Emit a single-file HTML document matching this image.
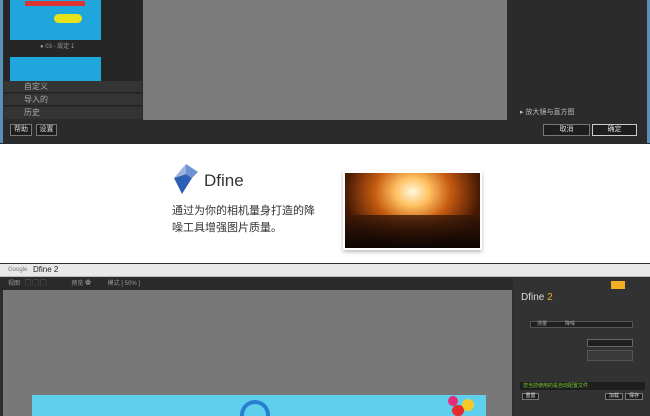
<!DOCTYPE html>
<html><head><meta charset="utf-8"><style>
*{margin:0;padding:0;box-sizing:border-box}
body{width:650px;height:416px;overflow:hidden;background:#fff;position:relative;font-family:"Liberation Sans","Noto Sans CJK SC",sans-serif}
.a{position:absolute}
.btn{position:absolute;background:#1e1e1e;border:1px solid #777;color:#ddd;font-size:7px;text-align:center;line-height:10px}
.cn{font-family:"Liberation Sans","Noto Sans CJK SC",sans-serif}
</style></head><body>
<div class="a" style="left:0;top:0;width:650px;height:144px;background:#2b2b2b"></div>
<div class="a" style="left:0;top:0;width:3px;height:143px;background:#5a8fb8"></div>
<div class="a" style="left:647px;top:0;width:3px;height:143px;background:#5a8fb8"></div>
<div class="a" style="left:4px;top:0;width:138px;height:81px;background:#262626"></div>
<div class="a" style="left:10px;top:0;width:91px;height:40px;background:#1fa6dc"></div>
<div class="a" style="left:25px;top:1px;width:60px;height:5px;background:#d33"></div>
<div class="a" style="left:54px;top:14px;width:28px;height:9px;background:#e8e21a;border-radius:5px"></div>
<div class="a" style="left:40px;top:41px;color:#999;font-size:6px">● 03 - 設定 1</div>
<div class="a" style="left:10px;top:57px;width:91px;height:24px;background:#1fa6dc"></div>
<div class="a" style="left:4px;top:81px;width:138px;height:12px;background:#343434;border-bottom:1px solid #222;color:#aaa;font-size:8px;padding-left:20px;line-height:12px">自定义</div>
<div class="a" style="left:4px;top:94px;width:138px;height:12px;background:#343434;border-bottom:1px solid #222;color:#aaa;font-size:8px;padding-left:20px;line-height:12px">导入的</div>
<div class="a" style="left:4px;top:107px;width:138px;height:12px;background:#343434;color:#aaa;font-size:8px;padding-left:20px;line-height:12px">历史</div>
<div class="a" style="left:143px;top:0;width:364px;height:120px;background:#7b7b7b"></div>
<div class="a" style="left:520px;top:107px;color:#bbb;font-size:7px">▸ 放大镜与直方图</div>
<div class="btn" style="left:10px;top:124px;width:22px;height:12px">帮助</div>
<div class="btn" style="left:36px;top:124px;width:21px;height:12px">设置</div>
<div class="btn" style="left:543px;top:124px;width:47px;height:12px">取消</div>
<div class="btn" style="left:592px;top:124px;width:45px;height:12px;border-color:#ccc">确定</div>
<svg class="a" style="left:172px;top:164px" width="28" height="30" viewBox="0 0 28 30"><polygon points="14,0 26,8 20,14 14,10" fill="#6f93d0"/><polygon points="2,14 14,10 20,14 10,30" fill="#2f5fb3"/><polygon points="14,0 2,14 14,10" fill="#9db4e0"/></svg>
<div class="a" style="left:204px;top:171px;font-size:17px;color:#333">Dfine</div>
<div class="a cn" style="left:172px;top:203px;font-size:11px;color:#333;line-height:17px">通过为你的相机量身打造的降<br>噪工具增强图片质量。</div>
<div class="a" style="left:343px;top:171px;width:139px;height:79px;background:#fff;box-shadow:0 2px 4px #bbb"></div>
<div class="a" style="left:345px;top:173px;width:135px;height:75px;background:radial-gradient(ellipse at 50% 25%,#fff8e0 0%,#ffc060 18%,#c55a10 40%,#4a1a05 70%,#140603 100%)"></div>
<div class="a" style="left:345px;top:215px;width:135px;height:33px;background:linear-gradient(#3a1a08cc,#0d0402)"></div>
<div class="a" style="left:0;top:263px;width:650px;height:153px;background:#2e2e2e"></div>
<div class="a" style="left:0;top:264px;width:650px;height:13px;background:#e9e9e9;border-bottom:1px solid #bbb"></div>
<div class="a" style="left:8px;top:267px;font-size:6px;color:#777">Google</div>
<div class="a" style="left:33px;top:265px;font-size:8px;color:#222">Dfine 2</div>
<div class="a" style="left:0;top:278px;width:513px;height:12px;background:#2a2a2a;color:#999;font-size:6px;line-height:12px;padding-left:8px">视图 &nbsp;&nbsp;▢ ▢ ▢ &nbsp;&nbsp;&nbsp;&nbsp;&nbsp;&nbsp;&nbsp;&nbsp;&nbsp;&nbsp;&nbsp;&nbsp;&nbsp;&nbsp;预览 ✿ &nbsp;&nbsp;&nbsp;&nbsp;&nbsp;&nbsp;&nbsp;&nbsp;&nbsp;模式 [ 50% ]</div>
<div class="a" style="left:3px;top:290px;width:509px;height:126px;background:#787878"></div>
<div class="a" style="left:32px;top:395px;width:454px;height:21px;background:#5ed0ee"></div>
<div class="a" style="left:240px;top:400px;width:30px;height:16px;border:4px solid #2a7fd0;border-radius:15px 15px 0 0;border-bottom:none"></div>
<div class="a" style="left:448px;top:396px;width:10px;height:10px;border-radius:5px;background:#e52b7a"></div>
<div class="a" style="left:462px;top:399px;width:12px;height:12px;border-radius:6px;background:#f5c92a"></div>
<div class="a" style="left:452px;top:405px;width:12px;height:11px;border-radius:6px;background:#e52b2b"></div>
<div class="a" style="left:513px;top:278px;width:137px;height:138px;background:#323232"></div>
<div class="a" style="left:611px;top:281px;width:14px;height:8px;background:#f0b020"></div>
<div class="a" style="left:521px;top:292px;font-size:10px;color:#ddd">Dfine <span style="color:#f0b020">2</span></div>
<div class="a" style="left:530px;top:321px;width:103px;height:7px;background:#1f1f1f;border:1px solid #555;font-size:5px;color:#aaa;padding-left:6px;line-height:5px">测量 &nbsp;&nbsp;&nbsp;&nbsp;&nbsp;&nbsp;&nbsp;&nbsp;&nbsp;&nbsp;&nbsp;&nbsp;降噪</div>
<div class="a" style="left:587px;top:339px;width:46px;height:8px;background:#1f1f1f;border:1px solid #666"></div>
<div class="a" style="left:587px;top:350px;width:46px;height:11px;background:#3a3a3a;border:1px solid #555"></div>
<div class="a" style="left:520px;top:382px;width:125px;height:8px;background:#1e1e1e;color:#7c3;font-size:5px;line-height:8px;padding-left:3px">您当前使用的是自动配置文件</div>
<div class="btn" style="left:522px;top:393px;width:17px;height:7px;font-size:5px;line-height:5px">重置</div>
<div class="btn" style="left:605px;top:393px;width:18px;height:7px;font-size:5px;line-height:5px">加载</div>
<div class="btn" style="left:625px;top:393px;width:18px;height:7px;font-size:5px;line-height:5px">保存</div>
</body></html>
